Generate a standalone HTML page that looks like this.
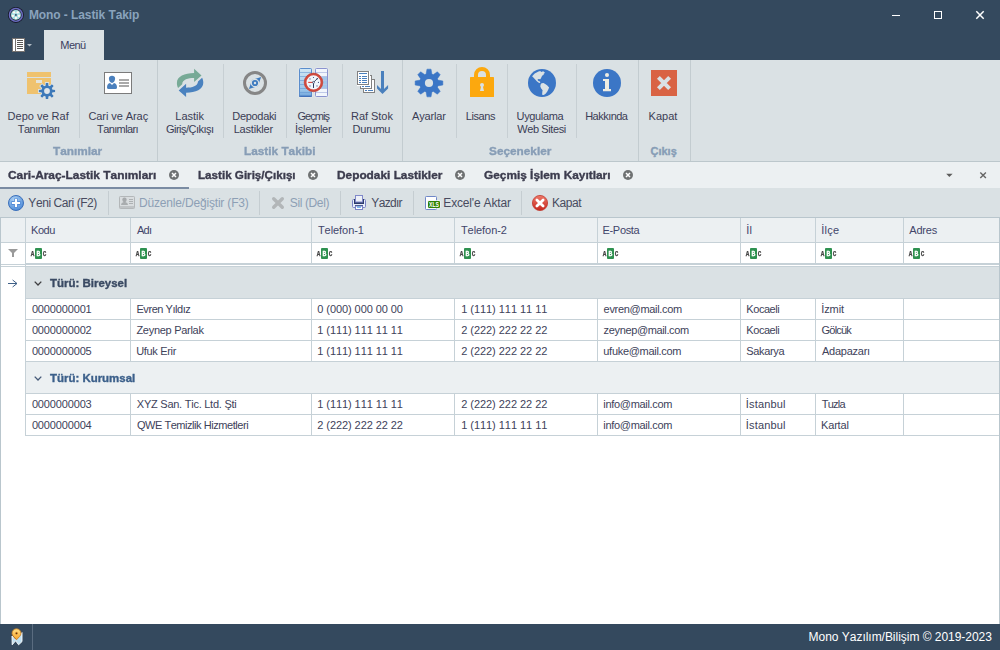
<!DOCTYPE html>
<html lang="tr">
<head>
<meta charset="utf-8">
<title>Mono - Lastik Takip</title>
<style>
*{box-sizing:border-box;margin:0;padding:0}
html,body{width:1000px;height:650px;overflow:hidden;background:#fff}
body{font-family:"Liberation Sans",sans-serif;font-size:11px;color:#3a3d55;position:relative;font-kerning:none}
.abs{position:absolute}
svg{position:absolute;overflow:visible}
/* title bar */
#titlebar{left:0;top:0;width:1000px;height:60px;background:#34495e}
/* ribbon */
#ribbon{left:0;top:60px;width:1000px;height:101px;background:#dae1e4}
#ribbonline{left:0;top:161px;width:1000px;height:1px;background:#bcc7cc}
.vsep{position:absolute;top:64px;width:1px;height:74px;background:#c7cfd3}
.gsep{position:absolute;top:60px;width:1px;height:101px;background:#c3ccd0}
/* doc tabs */
#tabstrip{left:0;top:162px;width:1000px;height:26px;background:#ecf0f2}
#tabul{left:0;top:187px;width:189px;height:2px;background:#7b8ca3}
/* toolbar */
#toolbar{left:0;top:188px;width:1000px;height:29px;background:#dae1e4}
.tsep{position:absolute;top:191px;width:1px;height:24px;background:#c5cdd1}
/* grid */
#grid{left:0;top:217px;width:1000px;height:407px;background:#fff;border:1px solid #b9c6cd;border-bottom:none}
.hl{position:absolute;height:1px;background:#c6d1d7}
.vl{position:absolute;width:1px;background:#c6d1d7}
/* status */
#status{left:0;top:624px;width:1000px;height:26px;background:#34495e}
#menutab{left:44px;top:30px;width:60px;height:31px;background:#dae1e4}
.tx{position:absolute;transform-origin:0 50%;white-space:nowrap;font-size:11px;line-height:13px;color:#3a3d55}
.title{font-size:12px;line-height:14px;font-weight:bold;color:#8aa3bc}
.menu{color:#3a3d5e}
.gcap{font-weight:bold;color:#879db6}
.dtab{font-weight:bold;line-height:14px;color:#3c3c4e}
.tb{font-size:12px;line-height:14px;color:#484b5f}
.tb.dis{color:#8d9fb5}
.hd{color:#42456a}
.cell{color:#40425a}
.grp{font-weight:bold}
.g0{color:#3a4a63}
.g1{color:#3b5f8a}
.stext{font-size:12px;line-height:14px;color:#fff}
.gcap,.dtab,.grp{-webkit-text-stroke:0.35px currentColor}
</style>
</head>
<body>
<svg width="0" height="0" style="left:0;top:0"><defs><radialGradient id="gplus" cx="0.4" cy="0.3" r="0.8"><stop offset="0" stop-color="#b4d6f4"/><stop offset="1" stop-color="#3f80d4"/></radialGradient><linearGradient id="gred" x1="0" y1="0" x2="0" y2="1"><stop offset="0" stop-color="#ee7a6a"/><stop offset="1" stop-color="#c5261c"/></linearGradient><linearGradient id="gpin" x1="0" y1="0" x2="0" y2="1"><stop offset="0" stop-color="#ffe08a"/><stop offset="1" stop-color="#f7a228"/></linearGradient></defs></svg>
<!-- TITLE BAR -->
<header id="sec-title">
<div id="titlebar" class="abs"></div>
<div id="menutab" class="abs"></div>
<svg id="titleicons" style="left:0;top:0" width="1000" height="60" viewBox="0 0 1000 60">
<g><circle cx="15.9" cy="14.9" r="8" fill="#17182a"/><circle cx="15.9" cy="14.9" r="6.4" fill="none" stroke="#6a6cc0" stroke-width="1.6"/><circle cx="15.9" cy="14.9" r="5.5" fill="#35444c"/><circle cx="15.9" cy="14.9" r="4.9" fill="#a4dce2"/>
<circle cx="15.90" cy="18.05" r="1.2" fill="#fff5f0"/>
<circle cx="12.90" cy="15.87" r="1.2" fill="#fff5f0"/>
<circle cx="14.05" cy="12.35" r="1.2" fill="#fff5f0"/>
<circle cx="17.75" cy="12.35" r="1.2" fill="#fff5f0"/>
<circle cx="18.90" cy="15.87" r="1.2" fill="#fff5f0"/>
<circle cx="15.9" cy="14.9" r="0.9" fill="#2b3a58"/></g>
<g stroke="#fff" stroke-width="1" fill="none"><path d="M892,15.5 H900"/><rect x="934.5" y="11.5" width="7" height="7"/><path d="M976.3,11.3 L983.7,18.7 M983.7,11.3 L976.3,18.7" stroke-width="1.5"/></g>
<g><rect x="12.5" y="38.5" width="12" height="13" fill="#fff" stroke="#767270"/><rect x="15" y="39" width="1" height="12" fill="#767270"/>
<rect x="17" y="40" width="6" height="1" fill="#5a5856"/>
<rect x="17" y="42" width="6" height="1" fill="#5a5856"/>
<rect x="17" y="44" width="6" height="1" fill="#5a5856"/>
<rect x="17" y="46" width="6" height="1" fill="#5a5856"/>
<rect x="17" y="48" width="6" height="1" fill="#5a5856"/>
<path d="M27,44 h5 l-2.5,2.6 z" fill="#c9d0d8" opacity="0.85"/></g>
</svg>
<div id="title" class="tx title" style="left:28.94px;top:8px;letter-spacing:-0.087px">Mono - Lastik Takip</div>
<div id="menu" class="tx menu" style="left:60.30px;top:39px;letter-spacing:-0.542px">Menü</div>
</header>
<!-- RIBBON -->
<nav id="sec-ribbon">
<div id="ribbon" class="abs"></div>
<div id="ribbonline" class="abs"></div>
<svg id="ribbonicons" style="left:0;top:0" width="1000" height="650" viewBox="0 0 1000 650">
<g><rect x="27" y="72" width="24" height="5" fill="#efc26e"/><rect x="27" y="78" width="24" height="16" fill="#efc26e"/><rect x="36" y="80" width="6" height="3" fill="#e3e4dc"/>
<circle cx="47" cy="91" r="6.3" fill="#dae1e4"/>
<path d="M45.74,86.16 L45.91,82.97 L48.09,82.97 L48.26,86.16 L49.53,86.69 L51.90,84.55 L53.45,86.10 L51.31,88.47 L51.84,89.74 L55.03,89.91 L55.03,92.09 L51.84,92.26 L51.31,93.53 L53.45,95.90 L51.90,97.45 L49.53,95.31 L48.26,95.84 L48.09,99.03 L45.91,99.03 L45.74,95.84 L44.47,95.31 L42.10,97.45 L40.55,95.90 L42.69,93.53 L42.16,92.26 L38.97,92.09 L38.97,89.91 L42.16,89.74 L42.69,88.47 L40.55,86.10 L42.10,84.55 L44.47,86.69Z" fill="#3d79b9" stroke="#dae1e4" stroke-width="2" paint-order="stroke"/><path d="M45.74,86.16 L45.91,82.97 L48.09,82.97 L48.26,86.16 L49.53,86.69 L51.90,84.55 L53.45,86.10 L51.31,88.47 L51.84,89.74 L55.03,89.91 L55.03,92.09 L51.84,92.26 L51.31,93.53 L53.45,95.90 L51.90,97.45 L49.53,95.31 L48.26,95.84 L48.09,99.03 L45.91,99.03 L45.74,95.84 L44.47,95.31 L42.10,97.45 L40.55,95.90 L42.69,93.53 L42.16,92.26 L38.97,92.09 L38.97,89.91 L42.16,89.74 L42.69,88.47 L40.55,86.10 L42.10,84.55 L44.47,86.69Z" fill="#3d79b9"/><circle cx="47" cy="91" r="5.5" fill="#3d79b9"/><circle cx="47" cy="91" r="2.9" fill="#dfe5ea"/></g>
<g><rect x="104.5" y="72.5" width="27" height="21" fill="#fff" stroke="#7b7b7b"/><path d="M108.9,78.7 C108.9,76.5 110.2,75.8 112,75.8 C113.8,75.8 115.1,76.5 115.1,78.7 C115.1,80.8 113.5,82.9 112,82.9 C110.5,82.9 108.9,80.8 108.9,78.7Z" fill="#4a80bd"/><path d="M107,87.4 Q107,83.8 110,83 L112,85 L114,83 Q117,83.8 117,87.4 Q117,89 115.4,89 L108.6,89 Q107,89 107,87.4Z" fill="#4a80bd"/><rect x="119" y="79" width="10" height="2" fill="#a9a9a9"/><rect x="119" y="82" width="10" height="2" fill="#a9a9a9"/><rect x="119" y="85" width="10" height="2" fill="#a9a9a9"/></g>
<g transform="translate(169,64)"><path d="M25.1,4.7 L32.5,11.4 L25.1,18.1 L25.1,14 C19,14 13.4,15.6 13.2,20.2 L9.1,24 C8.4,22.8 7.9,21 7.9,19 C7.9,12.5 15.5,9.1 25.1,9.1 Z" fill="#77aa96"/><path d="M25.1,4.7 L32.5,11.4 L25.1,18.1 L25.1,14 C19,14 13.4,15.6 13.2,20.2 L9.1,24 C8.4,22.8 7.9,21 7.9,19 C7.9,12.5 15.5,9.1 25.1,9.1 Z" fill="#4a82bf" transform="rotate(180 21.1 18.9)"/></g>
<g><circle cx="255" cy="83" r="10.5" fill="none" stroke="#868686" stroke-width="3"/><polygon points="261.1,76.9 258,86 248.9,89.1 252,80" fill="#3f7cc0"/><circle cx="255" cy="83" r="4.3" fill="#dae1e4"/><circle cx="255" cy="83" r="3.1" fill="#3f7cc0"/><circle cx="255" cy="83" r="1.2" fill="#dae1e4"/></g>
<defs><linearGradient id="pl" x1="0" y1="0" x2="0" y2="1"><stop offset="0" stop-color="#d2e8f6"/><stop offset="0.75" stop-color="#9cc6ea"/><stop offset="1" stop-color="#6fa5dc"/></linearGradient></defs>
<g>
<rect x="298.5" y="67.5" width="14" height="30" rx="1.5" fill="#eef2f4" opacity="0.7"/><rect x="314.5" y="67.5" width="14" height="30" rx="1.5" fill="#eef2f4" opacity="0.7"/>
<rect x="299.5" y="68.5" width="12" height="28" rx="0.8" fill="url(#pl)" stroke="#5a8dcc"/>
<rect x="300" y="72.0" width="11" height="1" fill="#5e93cf" opacity="0.55"/>
<rect x="300" y="76.0" width="11" height="1" fill="#5e93cf" opacity="0.55"/>
<rect x="300" y="80.0" width="11" height="1" fill="#5e93cf" opacity="0.55"/>
<rect x="300" y="84.0" width="11" height="1" fill="#5e93cf" opacity="0.55"/>
<rect x="300" y="88.0" width="11" height="1" fill="#5e93cf" opacity="0.55"/>
<rect x="300" y="92.0" width="11" height="1" fill="#5e93cf" opacity="0.55"/>
<rect x="299" y="95.5" width="13" height="1.5" fill="#2f5fae" opacity="0.6"/>
<rect x="315.5" y="68.5" width="12" height="28" rx="0.8" fill="#f2f6fc" stroke="#8a93cf"/>
<rect x="316" y="76" width="11" height="13" fill="#a3c7ea"/>
<rect x="316" y="72.0" width="11" height="1" fill="#b9c4e6" opacity="0.9"/>
<rect x="316" y="76.0" width="11" height="1" fill="#b9c4e6" opacity="0.9"/>
<rect x="316" y="80.0" width="11" height="1" fill="#b9c4e6" opacity="0.9"/>
<rect x="316" y="84.0" width="11" height="1" fill="#b9c4e6" opacity="0.9"/>
<rect x="316" y="88.0" width="11" height="1" fill="#b9c4e6" opacity="0.9"/>
<rect x="316" y="92.0" width="11" height="1" fill="#b9c4e6" opacity="0.9"/>
<circle cx="313.5" cy="82.5" r="9.6" fill="#e9eef2" opacity="0.6"/>
<circle cx="313.5" cy="82.4" r="8.2" fill="#f1f6fb" stroke="#d24a3e" stroke-width="2.3"/>
<circle cx="313.5" cy="82.4" r="9.3" fill="none" stroke="#b5332a" stroke-width="0.6"/>
<circle cx="313.5" cy="77.5" r="0.55" fill="#3c4a7a"/>
<circle cx="317.0" cy="78.9" r="0.55" fill="#3c4a7a"/>
<circle cx="318.4" cy="82.4" r="0.55" fill="#3c4a7a"/>
<circle cx="317.0" cy="85.9" r="0.55" fill="#3c4a7a"/>
<circle cx="313.5" cy="87.3" r="0.55" fill="#3c4a7a"/>
<circle cx="310.0" cy="85.9" r="0.55" fill="#3c4a7a"/>
<circle cx="310.0" cy="78.9" r="0.55" fill="#3c4a7a"/>
<line x1="313.5" y1="82.4" x2="308.2" y2="82.4" stroke="#d8433a" stroke-width="1.1"/><line x1="313.5" y1="82.4" x2="318" y2="77.9" stroke="#2c3a5c" stroke-width="0.9"/><line x1="313.5" y1="82.4" x2="313.5" y2="87.8" stroke="#2c3a5c" stroke-width="1"/><circle cx="313.5" cy="82.4" r="1" fill="#dfe8f4" stroke="#2c3a5c" stroke-width="0.6"/>
</g>
<g>
<rect x="363.5" y="79.5" width="11" height="13" fill="#fff" stroke="#818181"/>
<rect x="360.5" y="75.5" width="11" height="13" fill="#fff" stroke="#818181"/>
<rect x="357" y="71" width="13" height="15" fill="#fff"/>
<rect x="357.5" y="71.5" width="11" height="13" fill="#fff" stroke="#818181"/>
<g fill="#4a80bd"><rect x="359" y="73" width="8" height="1"/>
<rect x="359" y="76" width="2" height="1"/><rect x="362" y="76" width="5" height="1"/>
<rect x="359" y="78" width="2" height="1"/><rect x="362" y="78" width="5" height="1"/>
<rect x="359" y="80" width="2" height="1"/><rect x="362" y="80" width="5" height="1"/>
<rect x="359" y="82" width="2" height="1"/><rect x="362" y="82" width="5" height="1"/>
<rect x="362" y="86" width="2" height="1"/><rect x="365" y="86" width="5" height="1"/><rect x="365" y="90" width="2" height="1"/><rect x="368" y="90" width="5" height="1"/></g>
<polygon points="381,71 384,71 384,88.9 388.1,85 388.1,88.4 382.5,94 377,88.4 377,85 381,88.9" fill="#4a80bd"/>
</g>
<g><path d="M426.02,74.30 L426.97,69.15 L431.03,69.15 L431.98,74.30 L433.05,74.74 L437.36,71.77 L440.23,74.64 L437.26,78.95 L437.70,80.02 L442.85,80.97 L442.85,85.03 L437.70,85.98 L437.26,87.05 L440.23,91.36 L437.36,94.23 L433.05,91.26 L431.98,91.70 L431.03,96.85 L426.97,96.85 L426.02,91.70 L424.95,91.26 L420.64,94.23 L417.77,91.36 L420.74,87.05 L420.30,85.98 L415.15,85.03 L415.15,80.97 L420.30,80.02 L420.74,78.95 L417.77,74.64 L420.64,71.77 L424.95,74.74Z" fill="#3b76c6" stroke="#3b76c6" stroke-width="0.5" stroke-linejoin="round"/><circle cx="429" cy="83" r="9.3" fill="#3b76c6"/><circle cx="429" cy="83" r="4.1" fill="#dae1e4"/></g>
<g><path d="M476,78 L476,75 A6,6 0 0 1 488,75 L488,78" fill="none" stroke="#fca80e" stroke-width="4"/><rect x="470" y="77" width="24" height="20" rx="0.6" fill="#fca80e"/><circle cx="482" cy="85" r="2" fill="#dae1e4"/><polygon points="481.2,86 482.8,86 484,91 480,91" fill="#dae1e4"/></g>
<g><circle cx="542" cy="83" r="14" fill="#3b76c6"/><polygon points="532.1,76.3 534.7,73.4 538.5,71.6 540.3,71.1 541.2,71.9 543.2,71.3 545.0,72.8 543.5,73.9 543.8,74.8 542.1,75.7 541.2,77.7 540.3,79.2 538.5,78.9 537.4,79.8 538.5,81.0 540.0,81.5 540.3,82.7 539.1,83.0 536.8,81.3 535.0,79.2 533.6,77.7" fill="#dae1e4"/><polygon points="541.5,83.3 543.5,83.0 545.6,84.2 547.3,85.6 549.1,87.4 548.5,89.1 547.3,91.5 545.6,93.8 543.8,95.0 542.1,94.7 542.3,92.1 542.6,90.3 541.2,88.6 540.3,86.5 540.6,84.5" fill="#dae1e4"/></g>
<g><circle cx="607" cy="83" r="14" fill="#3b76c6"/><circle cx="607" cy="75" r="2.05" fill="#eeece2"/><path d="M603,79 H609 V89 H611 V91.2 H603 V89 H605 V81 H603 Z" fill="#eeece2"/></g>
<g><rect x="651" y="70" width="26" height="26" fill="#d96344"/><path d="M658.4,77.4 L669.6,88.6 M669.6,77.4 L658.4,88.6" stroke="#dae1e4" stroke-width="4" fill="none"/></g>
</svg>
<div class="vsep" style="left:79px"></div>
<div class="vsep" style="left:223px"></div>
<div class="vsep" style="left:286px"></div>
<div class="vsep" style="left:342px"></div>
<div class="vsep" style="left:456px"></div>
<div class="vsep" style="left:507px"></div>
<div class="vsep" style="left:576px"></div>
<div class="gsep" style="left:157px"></div>
<div class="gsep" style="left:402px"></div>
<div class="gsep" style="left:638px"></div>
<div class="gsep" style="left:690px"></div>
<div id="rb0" class="tx rb" style="left:7.60px;top:110px;letter-spacing:0.000px">Depo ve Raf</div>
<div id="rb1" class="tx rb" style="left:17.80px;top:123px;letter-spacing:-0.516px">Tanımları</div>
<div id="rb2" class="tx rb" style="left:88.41px;top:110px;letter-spacing:-0.070px">Cari ve Araç</div>
<div id="rb3" class="tx rb" style="left:97.05px;top:123px;letter-spacing:-0.617px">Tanımları</div>
<div id="rb4" class="tx rb" style="left:175.30px;top:110px;letter-spacing:0.000px">Lastik</div>
<div id="rb5" class="tx rb" style="left:165.93px;top:123px;letter-spacing:-0.510px">Giriş/Çıkışı</div>
<div id="rb6" class="tx rb" style="left:232.34px;top:110px;letter-spacing:-0.320px">Depodaki</div>
<div id="rb7" class="tx rb" style="left:233.70px;top:123px;letter-spacing:-0.196px">Lastikler</div>
<div id="rb8" class="tx rb" style="left:297.45px;top:110px;letter-spacing:-0.931px">Geçmiş</div>
<div id="rb9" class="tx rb" style="left:295.03px;top:123px;letter-spacing:-0.281px">İşlemler</div>
<div id="rb10" class="tx rb" style="left:351.05px;top:110px;letter-spacing:-0.041px">Raf Stok</div>
<div id="rb11" class="tx rb" style="left:352.60px;top:123px;letter-spacing:-0.262px">Durumu</div>
<div id="rb12" class="tx rb" style="left:411.99px;top:110px;letter-spacing:-0.153px">Ayarlar</div>
<div id="rb13" class="tx rb" style="left:465.70px;top:110px;letter-spacing:-0.406px">Lisans</div>
<div id="rb14" class="tx rb" style="left:516.60px;top:110px;letter-spacing:-0.368px">Uygulama</div>
<div id="rb15" class="tx rb" style="left:517.22px;top:123px;letter-spacing:-0.402px">Web Sitesi</div>
<div id="rb16" class="tx rb" style="left:585.18px;top:110px;letter-spacing:-0.524px">Hakkında</div>
<div id="rb17" class="tx rb" style="left:648.60px;top:110px;letter-spacing:0.000px">Kapat</div>
<div id="gc0" class="tx gcap" style="left:53.21px;top:145px;transform:scaleX(1.0710)">Tanımlar</div>
<div id="gc1" class="tx gcap" style="left:243.60px;top:145px;transform:scaleX(1.0733)">Lastik Takibi</div>
<div id="gc2" class="tx gcap" style="left:488.60px;top:145px;transform:scaleX(1.0737)">Seçenekler</div>
<div id="gc3" class="tx gcap" style="left:650.50px;top:145px;transform:scaleX(1.0000)">Çıkış</div>
</nav>
<!-- TOOLBAR -->
<div id="sec-toolbar">
<div id="toolbar" class="abs"></div>
<div class="tsep" style="left:108px"></div>
<div class="tsep" style="left:259px"></div>
<div class="tsep" style="left:340px"></div>
<div class="tsep" style="left:413px"></div>
<div class="tsep" style="left:521px"></div>
<svg id="tbicons" style="left:0;top:0" width="1000" height="650" viewBox="0 0 1000 650">
<g><circle cx="16" cy="203" r="7.5" fill="url(#gplus)" stroke="#3b70bb" stroke-width="1"/><path d="M16,198.4 V207.6 M11.4,203 H20.6" stroke="#3d7bd2" stroke-width="4" fill="none" opacity="0.7"/><path d="M16,199 V207 M12,203 H20" stroke="#fff" stroke-width="2.2" fill="none"/></g>
<g><rect x="119.5" y="196.5" width="15" height="12" rx="0.8" fill="#d9dddf" stroke="#b3b7b9"/><rect x="120" y="206" width="14" height="2" fill="#bfc3c5"/><circle cx="124.5" cy="199.8" r="2.2" fill="#a6aaac"/><rect x="123.5" y="200.5" width="2" height="2.5" fill="#a6aaac"/><path d="M121,205 Q121.2,202.6 123.4,202.3 L125.6,202.3 Q127.8,202.6 128,205 Z" fill="#a9adaf"/><rect x="129" y="199" width="4" height="1" fill="#adb1b3"/><rect x="129" y="201" width="4" height="1" fill="#adb1b3"/><rect x="129" y="203" width="4" height="1" fill="#adb1b3"/></g>
<path d="M273.7,198.7 L282.3,207.3 M282.3,198.7 L273.7,207.3" stroke="#b2b6b8" stroke-width="3.4" stroke-linecap="round" fill="none"/>
<g><rect x="352.5" y="199.5" width="13" height="8" rx="1" fill="#e8eef8" stroke="#7a83c6"/><rect x="354" y="199" width="10" height="5" fill="#2d3b6b"/><rect x="355.5" y="195.5" width="7" height="6.5" fill="#eef1f8" stroke="#8089c9"/><rect x="355" y="205" width="8" height="1" fill="#2d3b6b"/><rect x="355.5" y="206" width="7" height="3.5" fill="#fff" stroke="#7a83c6"/><rect x="357" y="206.5" width="4" height="1.2" fill="#4a9ae2"/></g>
<g><rect x="425.5" y="196.5" width="11" height="13" rx="0.8" fill="#fff" stroke="#7088c8"/><rect x="427.3" y="200.3" width="13.2" height="8.2" rx="1.4" fill="#f2f5f7"/><rect x="428" y="201" width="12" height="7" rx="1.2" fill="#2f8202"/><text x="429" y="207" font-family="'Liberation Sans',sans-serif" font-weight="bold" font-size="7" fill="#fff" textLength="10" lengthAdjust="spacingAndGlyphs">XLS</text></g>
<g><circle cx="540" cy="203" r="7.6" fill="url(#gred)" stroke="#c0392f" stroke-width="0.8"/><path d="M536.9,199.9 L543.1,206.1 M543.1,199.9 L536.9,206.1" stroke="#fff" stroke-width="2.8" stroke-linecap="round" fill="none"/></g>
</svg>
<div id="tb0" class="tx tb" style="left:28.37px;top:196px;letter-spacing:-0.440px">Yeni Cari (F2)</div>
<div id="tb1" class="tx tb dis" style="left:139.03px;top:196px;letter-spacing:-0.179px">Düzenle/Değiştir (F3)</div>
<div id="tb2" class="tx tb dis" style="left:289.80px;top:196px;letter-spacing:-0.381px">Sil (Del)</div>
<div id="tb3" class="tx tb" style="left:371.37px;top:196px;letter-spacing:-0.686px">Yazdır</div>
<div id="tb4" class="tx tb" style="left:443.30px;top:196px;letter-spacing:-0.169px">Excel'e Aktar</div>
<div id="tb5" class="tx tb" style="left:552.03px;top:196px;letter-spacing:-0.477px">Kapat</div>
</div>
<!-- DOC TABS -->
<div id="sec-tabs">
<div id="tabstrip" class="abs"></div>
<div id="tabul" class="abs"></div>
<svg id="tabicons" style="left:0;top:0" width="1000" height="650" viewBox="0 0 1000 650">
<g><circle cx="174" cy="175" r="5" fill="#6f7273"/><path d="M172,173 L176,177 M176,173 L172,177" stroke="#fff" stroke-width="1.5" fill="none"/></g>
<g><circle cx="313" cy="175" r="5" fill="#6f7273"/><path d="M311,173 L315,177 M315,173 L311,177" stroke="#fff" stroke-width="1.5" fill="none"/></g>
<g><circle cx="460" cy="175" r="5" fill="#6f7273"/><path d="M458,173 L462,177 M462,173 L458,177" stroke="#fff" stroke-width="1.5" fill="none"/></g>
<g><circle cx="628" cy="175" r="5" fill="#6f7273"/><path d="M626,173 L630,177 M630,173 L626,177" stroke="#fff" stroke-width="1.5" fill="none"/></g>
<path d="M946.2,173.8 h6.4 l-3.2,3.3 z" fill="#5c5c5c"/>
<path d="M980.3,172.5 L985.9,178 M985.9,172.5 L980.3,178" stroke="#666" stroke-width="1.4" fill="none"/>
</svg>
<div id="dt0" class="tx dtab" style="left:7.94px;top:168px;transform:scaleX(1.0825)">Cari-Araç-Lastik Tanımları</div>
<div id="dt1" class="tx dtab" style="left:197.84px;top:168px;transform:scaleX(1.0571)">Lastik Giriş/Çıkışı</div>
<div id="dt2" class="tx dtab" style="left:336.74px;top:168px;transform:scaleX(1.0772)">Depodaki Lastikler</div>
<div id="dt3" class="tx dtab" style="left:484.25px;top:168px;transform:scaleX(1.0770)">Geçmiş İşlem Kayıtları</div>
</div>
<!-- GRID -->
<main id="sec-grid">
<div id="grid" class="abs"></div>
<div class="abs" style="left:1px;top:218px;width:998px;height:24px;background:#ecf0f2"></div>
<div class="abs" style="left:26px;top:267px;width:973px;height:31px;background:#dae1e4"></div>
<div class="abs" style="left:26px;top:362px;width:973px;height:31px;background:#ecf0f2"></div>
<div class="hl" style="left:1px;top:242px;width:998px"></div>
<div class="hl" style="left:26px;top:263px;width:973px"></div>
<div class="hl" style="left:1px;top:264px;width:998px"></div>
<div class="hl" style="left:1px;top:266px;width:998px"></div>
<div class="hl" style="left:26px;top:298px;width:973px"></div>
<div class="hl" style="left:26px;top:319px;width:973px"></div>
<div class="hl" style="left:26px;top:340px;width:973px"></div>
<div class="hl" style="left:26px;top:361px;width:973px"></div>
<div class="hl" style="left:26px;top:393px;width:973px"></div>
<div class="hl" style="left:26px;top:414px;width:973px"></div>
<div class="hl" style="left:26px;top:435px;width:973px"></div>
<div class="vl" style="left:25px;top:218px;height:218px"></div>
<div class="vl" style="left:130px;top:218px;height:46px"></div>
<div class="vl" style="left:130px;top:299px;height:62px"></div>
<div class="vl" style="left:130px;top:394px;height:41px"></div>
<div class="vl" style="left:311px;top:218px;height:46px"></div>
<div class="vl" style="left:311px;top:299px;height:62px"></div>
<div class="vl" style="left:311px;top:394px;height:41px"></div>
<div class="vl" style="left:454px;top:218px;height:46px"></div>
<div class="vl" style="left:454px;top:299px;height:62px"></div>
<div class="vl" style="left:454px;top:394px;height:41px"></div>
<div class="vl" style="left:597px;top:218px;height:46px"></div>
<div class="vl" style="left:597px;top:299px;height:62px"></div>
<div class="vl" style="left:597px;top:394px;height:41px"></div>
<div class="vl" style="left:740px;top:218px;height:46px"></div>
<div class="vl" style="left:740px;top:299px;height:62px"></div>
<div class="vl" style="left:740px;top:394px;height:41px"></div>
<div class="vl" style="left:815px;top:218px;height:46px"></div>
<div class="vl" style="left:815px;top:299px;height:62px"></div>
<div class="vl" style="left:815px;top:394px;height:41px"></div>
<div class="vl" style="left:903px;top:218px;height:46px"></div>
<div class="vl" style="left:903px;top:299px;height:62px"></div>
<div class="vl" style="left:903px;top:394px;height:41px"></div>
<svg id="gridicons" style="left:0;top:0" width="1000" height="650" viewBox="0 0 1000 650">
<polygon points="8,249 18,249 14,253 14,257 12,257 12,253" fill="#9a9a9a"/>
<g font-family="'Liberation Mono',monospace" font-weight="bold" font-size="7.2"><text x="30.7" y="256" fill="#444" stroke="#444" stroke-width="0.25" style="filter:grayscale(1)" textLength="3.6" lengthAdjust="spacingAndGlyphs">A</text><rect x="35" y="248" width="7" height="11" rx="0.9" fill="#2f9150"/><text x="36.6" y="256" fill="#fff" stroke="#fff" stroke-width="0.3" style="filter:brightness(1)" textLength="3.8" lengthAdjust="spacingAndGlyphs">B</text><text x="42.8" y="256" fill="#444" stroke="#444" stroke-width="0.25" style="filter:grayscale(1)" textLength="3.6" lengthAdjust="spacingAndGlyphs">C</text></g>
<g font-family="'Liberation Mono',monospace" font-weight="bold" font-size="7.2"><text x="135.7" y="256" fill="#444" stroke="#444" stroke-width="0.25" style="filter:grayscale(1)" textLength="3.6" lengthAdjust="spacingAndGlyphs">A</text><rect x="140" y="248" width="7" height="11" rx="0.9" fill="#2f9150"/><text x="141.6" y="256" fill="#fff" stroke="#fff" stroke-width="0.3" style="filter:brightness(1)" textLength="3.8" lengthAdjust="spacingAndGlyphs">B</text><text x="147.8" y="256" fill="#444" stroke="#444" stroke-width="0.25" style="filter:grayscale(1)" textLength="3.6" lengthAdjust="spacingAndGlyphs">C</text></g>
<g font-family="'Liberation Mono',monospace" font-weight="bold" font-size="7.2"><text x="316.7" y="256" fill="#444" stroke="#444" stroke-width="0.25" style="filter:grayscale(1)" textLength="3.6" lengthAdjust="spacingAndGlyphs">A</text><rect x="321" y="248" width="7" height="11" rx="0.9" fill="#2f9150"/><text x="322.6" y="256" fill="#fff" stroke="#fff" stroke-width="0.3" style="filter:brightness(1)" textLength="3.8" lengthAdjust="spacingAndGlyphs">B</text><text x="328.8" y="256" fill="#444" stroke="#444" stroke-width="0.25" style="filter:grayscale(1)" textLength="3.6" lengthAdjust="spacingAndGlyphs">C</text></g>
<g font-family="'Liberation Mono',monospace" font-weight="bold" font-size="7.2"><text x="459.7" y="256" fill="#444" stroke="#444" stroke-width="0.25" style="filter:grayscale(1)" textLength="3.6" lengthAdjust="spacingAndGlyphs">A</text><rect x="464" y="248" width="7" height="11" rx="0.9" fill="#2f9150"/><text x="465.6" y="256" fill="#fff" stroke="#fff" stroke-width="0.3" style="filter:brightness(1)" textLength="3.8" lengthAdjust="spacingAndGlyphs">B</text><text x="471.8" y="256" fill="#444" stroke="#444" stroke-width="0.25" style="filter:grayscale(1)" textLength="3.6" lengthAdjust="spacingAndGlyphs">C</text></g>
<g font-family="'Liberation Mono',monospace" font-weight="bold" font-size="7.2"><text x="602.7" y="256" fill="#444" stroke="#444" stroke-width="0.25" style="filter:grayscale(1)" textLength="3.6" lengthAdjust="spacingAndGlyphs">A</text><rect x="607" y="248" width="7" height="11" rx="0.9" fill="#2f9150"/><text x="608.6" y="256" fill="#fff" stroke="#fff" stroke-width="0.3" style="filter:brightness(1)" textLength="3.8" lengthAdjust="spacingAndGlyphs">B</text><text x="614.8" y="256" fill="#444" stroke="#444" stroke-width="0.25" style="filter:grayscale(1)" textLength="3.6" lengthAdjust="spacingAndGlyphs">C</text></g>
<g font-family="'Liberation Mono',monospace" font-weight="bold" font-size="7.2"><text x="745.7" y="256" fill="#444" stroke="#444" stroke-width="0.25" style="filter:grayscale(1)" textLength="3.6" lengthAdjust="spacingAndGlyphs">A</text><rect x="750" y="248" width="7" height="11" rx="0.9" fill="#2f9150"/><text x="751.6" y="256" fill="#fff" stroke="#fff" stroke-width="0.3" style="filter:brightness(1)" textLength="3.8" lengthAdjust="spacingAndGlyphs">B</text><text x="757.8" y="256" fill="#444" stroke="#444" stroke-width="0.25" style="filter:grayscale(1)" textLength="3.6" lengthAdjust="spacingAndGlyphs">C</text></g>
<g font-family="'Liberation Mono',monospace" font-weight="bold" font-size="7.2"><text x="820.7" y="256" fill="#444" stroke="#444" stroke-width="0.25" style="filter:grayscale(1)" textLength="3.6" lengthAdjust="spacingAndGlyphs">A</text><rect x="825" y="248" width="7" height="11" rx="0.9" fill="#2f9150"/><text x="826.6" y="256" fill="#fff" stroke="#fff" stroke-width="0.3" style="filter:brightness(1)" textLength="3.8" lengthAdjust="spacingAndGlyphs">B</text><text x="832.8" y="256" fill="#444" stroke="#444" stroke-width="0.25" style="filter:grayscale(1)" textLength="3.6" lengthAdjust="spacingAndGlyphs">C</text></g>
<g font-family="'Liberation Mono',monospace" font-weight="bold" font-size="7.2"><text x="908.7" y="256" fill="#444" stroke="#444" stroke-width="0.25" style="filter:grayscale(1)" textLength="3.6" lengthAdjust="spacingAndGlyphs">A</text><rect x="913" y="248" width="7" height="11" rx="0.9" fill="#2f9150"/><text x="914.6" y="256" fill="#fff" stroke="#fff" stroke-width="0.3" style="filter:brightness(1)" textLength="3.8" lengthAdjust="spacingAndGlyphs">B</text><text x="920.8" y="256" fill="#444" stroke="#444" stroke-width="0.25" style="filter:grayscale(1)" textLength="3.6" lengthAdjust="spacingAndGlyphs">C</text></g>
<path d="M8,283.5 H17 M12.6,280 L17,283.5 L12.6,287" stroke="#3f6088" stroke-width="1" fill="none"/>
<path d="M34.7,281.6 L38,285 L41.3,281.6" stroke="#3f3f41" stroke-width="1.35" fill="none"/>
<path d="M34.7,376.6 L38,380 L41.3,376.6" stroke="#465a78" stroke-width="1.35" fill="none"/>
</svg>
<div id="hd0" class="tx hd" style="left:31.05px;top:224px;letter-spacing:-0.445px">Kodu</div>
<div id="hd1" class="tx hd" style="left:136.88px;top:224px;letter-spacing:-0.708px">Adı</div>
<div id="hd2" class="tx hd" style="left:317.92px;top:224px;letter-spacing:-0.055px">Telefon-1</div>
<div id="hd3" class="tx hd" style="left:460.92px;top:224px;letter-spacing:-0.057px">Telefon-2</div>
<div id="hd4" class="tx hd" style="left:602.50px;top:224px;letter-spacing:-0.319px">E-Posta</div>
<div id="hd5" class="tx hd" style="left:746.23px;top:224px;letter-spacing:0.316px">İl</div>
<div id="hd6" class="tx hd" style="left:821.30px;top:224px;letter-spacing:0.210px">İlçe</div>
<div id="hd7" class="tx hd" style="left:909.28px;top:224px;letter-spacing:-0.211px">Adres</div>
<div id="c0_0" class="tx cell" style="left:31.92px;top:303px;letter-spacing:-0.151px">0000000001</div>
<div id="c0_1" class="tx cell" style="left:136.47px;top:303px;letter-spacing:-0.447px">Evren Yıldız</div>
<div id="c0_2" class="tx cell" style="left:317.31px;top:303px;letter-spacing:-0.076px">0 (000) 000 00 00</div>
<div id="c0_3" class="tx cell" style="left:461.17px;top:303px;letter-spacing:-0.038px">1 (111) 111 11 11</div>
<div id="c0_4" class="tx cell" style="left:603.59px;top:303px;letter-spacing:-0.314px">evren@mail.com</div>
<div id="c0_5" class="tx cell" style="left:746.36px;top:303px;letter-spacing:-0.453px">Kocaeli</div>
<div id="c0_6" class="tx cell" style="left:821.24px;top:303px;letter-spacing:-0.095px">İzmit</div>
<div id="c1_0" class="tx cell" style="left:31.92px;top:324px;letter-spacing:-0.151px">0000000002</div>
<div id="c1_1" class="tx cell" style="left:136.43px;top:324px;letter-spacing:-0.286px">Zeynep Parlak</div>
<div id="c1_2" class="tx cell" style="left:317.31px;top:324px;letter-spacing:-0.076px">1 (111) 111 11 11</div>
<div id="c1_3" class="tx cell" style="left:461.17px;top:324px;letter-spacing:-0.038px">2 (222) 222 22 22</div>
<div id="c1_4" class="tx cell" style="left:603.60px;top:324px;letter-spacing:-0.361px">zeynep@mail.com</div>
<div id="c1_5" class="tx cell" style="left:746.36px;top:324px;letter-spacing:-0.453px">Kocaeli</div>
<div id="c1_6" class="tx cell" style="left:821.53px;top:324px;letter-spacing:-0.777px">Gölcük</div>
<div id="c2_0" class="tx cell" style="left:31.92px;top:345px;letter-spacing:-0.151px">0000000005</div>
<div id="c2_1" class="tx cell" style="left:136.14px;top:345px;letter-spacing:-0.319px">Ufuk Erir</div>
<div id="c2_2" class="tx cell" style="left:317.31px;top:345px;letter-spacing:-0.076px">1 (111) 111 11 11</div>
<div id="c2_3" class="tx cell" style="left:461.17px;top:345px;letter-spacing:-0.038px">2 (222) 222 22 22</div>
<div id="c2_4" class="tx cell" style="left:603.31px;top:345px;letter-spacing:-0.296px">ufuke@mail.com</div>
<div id="c2_5" class="tx cell" style="left:746.17px;top:345px;letter-spacing:-0.306px">Sakarya</div>
<div id="c2_6" class="tx cell" style="left:822.00px;top:345px;letter-spacing:-0.250px">Adapazarı</div>
<div id="c3_0" class="tx cell" style="left:31.92px;top:398px;letter-spacing:-0.151px">0000000003</div>
<div id="c3_1" class="tx cell" style="left:136.87px;top:398px;letter-spacing:-0.251px">XYZ San. Tic. Ltd. Şti</div>
<div id="c3_2" class="tx cell" style="left:317.31px;top:398px;letter-spacing:-0.076px">1 (111) 111 11 11</div>
<div id="c3_3" class="tx cell" style="left:461.17px;top:398px;letter-spacing:-0.038px">2 (222) 222 22 22</div>
<div id="c3_4" class="tx cell" style="left:603.30px;top:398px;letter-spacing:-0.312px">info@mail.com</div>
<div id="c3_5" class="tx cell" style="left:745.74px;top:398px;letter-spacing:0.177px">İstanbul</div>
<div id="c3_6" class="tx cell" style="left:821.81px;top:398px;letter-spacing:-0.784px">Tuzla</div>
<div id="c4_0" class="tx cell" style="left:31.92px;top:419px;letter-spacing:-0.151px">0000000004</div>
<div id="c4_1" class="tx cell" style="left:136.88px;top:419px;letter-spacing:-0.449px">QWE Temizlik Hizmetleri</div>
<div id="c4_2" class="tx cell" style="left:317.31px;top:419px;letter-spacing:-0.076px">2 (222) 222 22 22</div>
<div id="c4_3" class="tx cell" style="left:461.17px;top:419px;letter-spacing:-0.038px">1 (111) 111 11 11</div>
<div id="c4_4" class="tx cell" style="left:603.30px;top:419px;letter-spacing:-0.312px">info@mail.com</div>
<div id="c4_5" class="tx cell" style="left:745.74px;top:419px;letter-spacing:0.177px">İstanbul</div>
<div id="c4_6" class="tx cell" style="left:821.11px;top:419px;letter-spacing:-0.202px">Kartal</div>
<div id="g0" class="tx grp g0" style="left:50.24px;top:277px;transform:scaleX(1.0428)">Türü: Bireysel</div>
<div id="g1" class="tx grp g1" style="left:50.00px;top:372px;transform:scaleX(1.0400)">Türü: Kurumsal</div>
</main>
<!-- STATUS -->
<footer id="sec-status">
<div id="status" class="abs"></div>
<svg id="sticons" style="left:0;top:0" width="1000" height="650" viewBox="0 0 1000 650">
<g><polygon points="12,636 15.5,640 22,632.6 22,641.6 18.6,644.8 15.6,640.8 12.2,644.8" fill="#bfe0f2" stroke="#fff" stroke-width="0.9"/><path d="M16.5,639.8 C14.5,637.4 12,635.8 12,633.3 A4.5,4.5 0 0 1 21,633.3 C21,635.8 18.5,637.4 16.5,639.8Z" fill="url(#gpin)" stroke="#c67a1c" stroke-width="0.8"/><circle cx="16.5" cy="633.3" r="1.5" fill="#f3a73a"/><circle cx="16.5" cy="633.3" r="0.9" fill="#5c3210"/></g>
<rect x="32" y="624" width="1" height="26" fill="#5a6c80"/>
</svg>
<div id="stext" class="tx stext" style="left:808.60px;top:630px;letter-spacing:-0.030px">Mono Yazılım/Bilişim © 2019-2023</div>
</footer>
</body>
</html>
